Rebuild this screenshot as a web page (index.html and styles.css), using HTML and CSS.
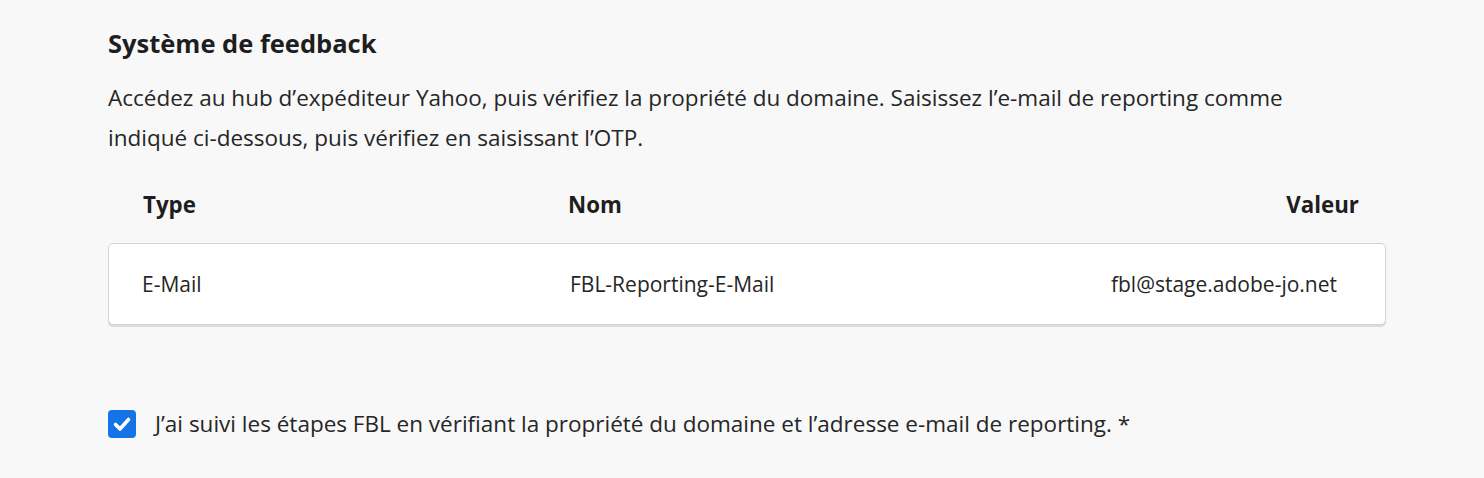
FILE: index.html
```html
<!DOCTYPE html>
<html lang="fr">
<head>
<meta charset="utf-8">
<link rel="stylesheet" href="styles.css">
</head>
<body>
<section class="section">
  <h2 class="title">Système de feedback</h2>
  <p class="desc">Accédez au hub d’expéditeur Yahoo, puis vérifiez la propriété du domaine. Saisissez l’e-mail de reporting comme indiqué ci-dessous, puis vérifiez en saisissant l’OTP.</p>
  <div class="thead">
    <span>Type</span>
    <span>Nom</span>
    <span class="right">Valeur</span>
  </div>
  <div class="card">
    <span>E-Mail</span>
    <span>FBL-Reporting-E-Mail</span>
    <span class="right">fbl@stage.adobe-jo.net</span>
  </div>
  <label class="check">
    <span class="box"><svg viewBox="0 0 28 28" width="28" height="28"><path d="M7.5 14.5 L12 19 L20.5 9.5" fill="none" stroke="#fff" stroke-width="3.6" stroke-linecap="round" stroke-linejoin="round"/></svg></span>
    <span class="label">J’ai suivi les étapes FBL en vérifiant la propriété du domaine et l’adresse e-mail de reporting. *</span>
  </label>
</section>
</body>
</html>
```
FILE: styles.css
```css
html, body {
  margin: 0;
  padding: 0;
  background: #f8f8f8;
}
body {
  font-family: "Open Sans", "Noto Sans", sans-serif;
  color: #222;
}
.section {
  width: 1278px;
  padding: 28px 0 0 108px;
}
.title {
  margin: 0;
  font-size: 25.5px;
  font-weight: 700;
  line-height: 30px;
  color: #1e1e1e;
}
.desc {
  margin: 20px 0 0;
  font-size: 22.5px;
  line-height: 40px;
  color: #262626;
  width: 1200px;
}
.thead {
  display: grid;
  grid-template-columns: 425px 1fr auto;
  margin-top: 32px;
  padding: 0 27px 0 35px;
  font-size: 22.3px;
  font-weight: 700;
  line-height: 30px;
  color: #1e1e1e;
}
.right { text-align: right; }
.card {
  display: grid;
  grid-template-columns: 428px 1fr auto;
  align-items: center;
  margin-top: 23px;
  height: 80px;
  padding: 0 48px 0 33px;
  background: #fff;
  border: 1px solid #d3d3d3;
  border-radius: 5px;
  box-shadow: 0 2px 0 #dcdcdc;
  font-size: 21px;
  color: #262626;
}
.check {
  display: flex;
  align-items: center;
  gap: 19px;
  margin-top: 84px;
}
.box {
  width: 28px;
  height: 28px;
  border-radius: 4px;
  background: #1473e6;
  display: flex;
}
.label {
  font-size: 22.5px;
  line-height: 30px;
  color: #262626;
}
```
